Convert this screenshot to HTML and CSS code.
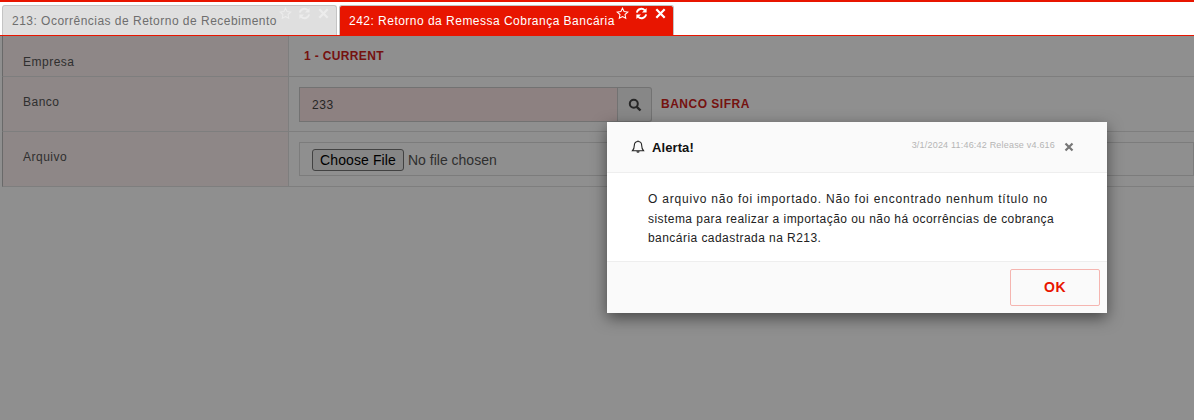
FILE: index.html
```html
<!DOCTYPE html>
<html lang="pt">
<head>
<meta charset="utf-8">
<title>Retorno da Remessa</title>
<link rel="stylesheet" href="styles.css">
</head>
<body>
<header class="tabbar">
  <div class="tab">
    <span class="tab-title">213: Ocorrências de Retorno de Recebimento</span>
    <span class="tab-icons">
      <svg class="ic" viewBox="0 0 14 14"><path d="M7 1.200l1.700 3.700 4 .5-3 2.700.8 4L7 10.200l-3.500 1.900.8-4-3-2.700 4-.5z" fill="none" stroke="currentColor" stroke-width="1.100"/></svg>
      <svg class="ic" viewBox="0 0 14 14"><path d="M2 6a5 5 0 0 1 8.600-2.400M12 8a5 5 0 0 1-8.600 2.400" fill="none" stroke="currentColor" stroke-width="2"/><path d="M12.500 1v5h-5zM1.500 13V8h5z" fill="currentColor"/></svg>
      <svg class="ic" viewBox="0 0 14 14"><path d="M2.500 2.500l9 9M11.500 2.500l-9 9" fill="none" stroke="currentColor" stroke-width="2.400"/></svg>
    </span>
  </div>
  <div class="tab tab-active">
    <span class="tab-title">242: Retorno da Remessa Cobrança Bancária</span>
    <span class="tab-icons">
      <svg class="ic" viewBox="0 0 14 14"><path d="M7 1.200l1.700 3.700 4 .5-3 2.700.8 4L7 10.200l-3.500 1.900.8-4-3-2.700 4-.5z" fill="none" stroke="currentColor" stroke-width="1.100"/></svg>
      <svg class="ic" viewBox="0 0 14 14"><path d="M2 6a5 5 0 0 1 8.600-2.400M12 8a5 5 0 0 1-8.600 2.400" fill="none" stroke="currentColor" stroke-width="2"/><path d="M12.500 1v5h-5zM1.500 13V8h5z" fill="currentColor"/></svg>
      <svg class="ic" viewBox="0 0 14 14"><path d="M2.500 2.500l9 9M11.500 2.500l-9 9" fill="none" stroke="currentColor" stroke-width="2.400"/></svg>
    </span>
  </div>
</header>
<main class="content">
  <div class="row row-empresa">
    <div class="label">Empresa</div>
    <div class="value"><span class="strong-red">1 - CURRENT</span></div>
  </div>
  <div class="row row-banco">
    <div class="label">Banco</div>
    <div class="value">
      <div class="field">233</div>
      <div class="search-btn"><svg class="search-ic" viewBox="0 0 14 14"><circle cx="5.800" cy="5.800" r="4" fill="none" stroke="currentColor" stroke-width="2"/><path d="M8.800 8.800l3.700 3.700" stroke="currentColor" stroke-width="2.400" fill="none"/></svg></div>
      <span class="strong-red bank-name">BANCO SIFRA</span>
    </div>
  </div>
  <div class="row row-arquivo">
    <div class="label">Arquivo</div>
    <div class="value">
      <div class="file-box"><span class="file-btn">Choose File</span><span class="file-text">No file chosen</span></div>
    </div>
  </div>
  <div class="backdrop"></div>
</main>
<section class="modal">
  <div class="modal-head">
    <svg class="bell" viewBox="0 0 14 14"><path d="M7 1.500c-2.500 0-3.700 1.800-3.700 4 0 2.700-.8 4-1.800 5.200h11c-1-1.200-1.800-2.500-1.800-5.200 0-2.200-1.200-4-3.700-4zM5.800 11.500a1.300 1.300 0 0 0 2.400 0M7 .5v1" fill="none" stroke="currentColor" stroke-width="1.100"/></svg>
    <span class="modal-title">Alerta!</span>
    <span class="release">3/1/2024 11:46:42 Release v4.616</span>
    <svg class="close" viewBox="0 0 10 10"><path d="M1.500 1.500l7 7M8.500 1.500l-7 7" fill="none" stroke="currentColor" stroke-width="2.200"/></svg>
  </div>
  <div class="modal-body">O arquivo não foi importado. Não foi encontrado nenhum título no<br>sistema para realizar a importação ou não há ocorrências de cobrança<br>bancária cadastrada na R213.</div>
  <div class="modal-foot"><div class="ok-btn">OK</div></div>
</section>
</body>
</html>
```
FILE: styles.css
```css
* { box-sizing: border-box; }
html, body { margin: 0; height: 100%; overflow: hidden; }
body { font-family: "Liberation Sans", Arial, sans-serif; font-size: 12px; background: #fff; color: #333; display: flex; flex-direction: column; }
.tabbar { height: 36px; flex: none; border-top: 2px solid #e81500; border-bottom: 1px solid #e81500; padding: 3px 0 0 2px; display: flex; gap: 2px; background: #fff; }
.tab { width: 335px; height: 30px; border: 1px solid #c4c4c4; border-bottom: 0; border-radius: 3px 3px 0 0; background: #dfdfdf; color: #6e6e6e; display: flex; padding-left: 9px; position: relative; }
.tab-title { line-height: 30px; font-size: 12px; letter-spacing: .48px; white-space: nowrap; }
.tab-icons { display: flex; gap: 6px; position: absolute; right: 6px; top: 1px; color: #ececec; }
.ic { width: 13px; height: 13px; display: block; }
.tab-active { background: #e81500; color: #fff; }
.tab-active .tab-icons { color: #fff; }
.content { flex: 1; position: relative; background: #fff; }
.row { display: grid; grid-template-columns: 286px 1fr; margin-left: 2px; border-left: 1px solid #bbb; border-bottom: 1px solid #e0e0e0; }
.row-empresa { height: 41px; }
.row-banco { height: 55px; }
.row-arquivo { height: 55px; }
.label { background: #fdf0f0; border-right: 1px solid #e0e0e0; padding: 18px 0 0 20px; color: #555; font-size: 12px; letter-spacing: .5px; }
.row-empresa .label { padding-top: 19px; }
.value { display: flex; align-items: flex-start; padding-left: 10px; padding-top: 10px; min-width: 0; }
.row-empresa .value { padding: 13px 0 0 15px; }
.strong-red { color: #d1231b; font-weight: 700; font-size: 12px; letter-spacing: .35px; }
.field { width: 319px; height: 35px; border: 1px solid #ccc; background: #fce6e6; padding: 10px 0 0 12px; font-size: 12px; letter-spacing: .6px; color: #444; }
.search-btn { width: 34px; height: 35px; border: 1px solid #ccc; border-left: 0; border-radius: 0 3px 3px 0; background: #f0f0f0; display: flex; align-items: center; justify-content: center; color: #444; }
.search-ic { width: 14px; height: 14px; }
.bank-name { margin: 10px 0 0 9px; letter-spacing: .5px; }
.file-box { flex: 1; height: 34px; border: 1px solid #ddd; display: flex; align-items: center; padding: 2px 0 0 12px; }
.file-btn { height: 22px; width: 92px; border: 1px solid #767676; border-radius: 3px; background: #efefef; color: #000; font-size: 14px; line-height: 20px; text-align: center; letter-spacing: .1px; }
.file-text { margin-left: 4px; font-size: 14px; color: #555; }
.backdrop { position: absolute; inset: 0; background: rgba(0, 0, 0, .44); }
.modal { position: absolute; left: 607px; top: 122px; width: 500px; height: 191px; background: #fff; box-shadow: 0 5px 15px rgba(0, 0, 0, .5); border-radius: 2px; color: #222; display: flex; flex-direction: column; }
.modal-head { height: 51px; flex: none; background: #fafafa; border-bottom: 1px solid #eee; display: flex; align-items: center; padding: 0 33px 0 24px; }
.bell { width: 14px; height: 14px; color: #222; }
.modal-title { margin-left: 7px; font-weight: 700; font-size: 13px; color: #111; letter-spacing: .1px; }
.release { margin-left: auto; font-size: 9px; letter-spacing: .2px; color: #b5b5b5; position: relative; top: -2px; }
.close { width: 10px; height: 10px; margin-left: 9px; color: #777; }
.modal-body { flex: 1; padding: 17px 30px 0 41px; font-size: 12px; line-height: 19.500px; letter-spacing: .45px; color: #222; white-space: nowrap; }
.modal-body::first-line { letter-spacing: .8px; }
.modal-foot { height: 52px; flex: none; background: #fafafa; border-top: 1px solid #eee; display: flex; justify-content: flex-end; padding: 7px 7px 0 0; }
.ok-btn { width: 90px; height: 37px; border: 1px solid #f5b5b0; border-radius: 2px; color: #e81500; font-weight: 700; font-size: 14px; line-height: 35px; text-align: center; letter-spacing: .4px; }
```
